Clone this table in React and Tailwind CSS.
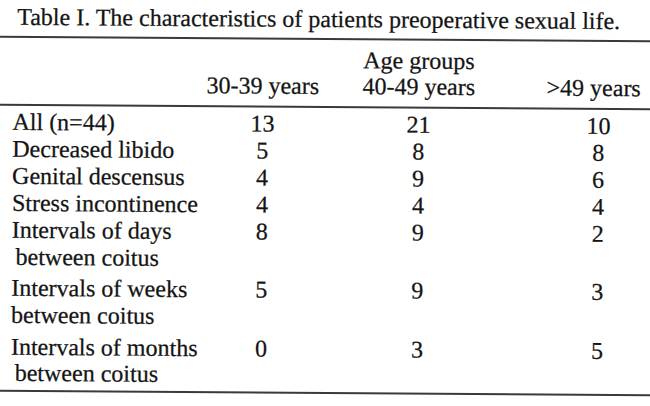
const rows = [
  { lines: ["All (n=44)"], values: ["13", "21", "10"] },
  { lines: ["Decreased libido"], values: ["5", "8", "8"] },
  { lines: ["Genital descensus"], values: ["4", "9", "6"] },
  { lines: ["Stress incontinence"], values: ["4", "4", "4"] },
  { lines: ["Intervals of days", "between coitus"], values: ["8", "9", "2"], indent: true },
  { lines: ["Intervals of weeks", "between coitus"], values: ["5", "9", "3"], gap: "mt-[4px]" },
  { lines: ["Intervals of months", "between coitus"], values: ["0", "3", "5"], indent: true, gap: "mt-[5px]", tight: true },
];

function Rule({ className = "" }) {
  return <div className={`h-[2px] bg-[#3a3a3a] ${className}`} />;
}

function Row({ row }) {
  return (
    <div className={`flex ${row.gap || ""}`}>
      <div className="w-[212px] pl-[12px] whitespace-nowrap">
        <div>{row.lines[0]}</div>
        {row.lines[1] && (
          <div className={`${row.indent ? "pl-[4px]" : ""} ${row.tight ? "leading-[24px]" : ""}`}>{row.lines[1]}</div>
        )}
      </div>
      <div className="w-[100px] text-center">{row.values[0]}</div>
      <div className="ml-[56px] w-[100px] text-center">{row.values[1]}</div>
      <div className="ml-[80px] w-[100px] text-center">{row.values[2]}</div>
    </div>
  );
}

export default function App() {
  return (
    <div className="w-[650px] h-[406px] overflow-hidden bg-white text-[#141414] font-['Liberation_Serif',serif] text-[24px] leading-[27px] [-webkit-text-stroke:0.25px_#141414]">
      <div className="w-[650px] rotate-[0.4deg]">
        <div className="pt-[6px] pl-[16px] whitespace-nowrap">
          Table I. The characteristics of patients preoperative sexual life.
        </div>
        <Rule className="mt-[5px] -mx-[4px]" />

        <div className="mt-[7px] leading-[26px]">
          <div className="flex">
            <div className="ml-[368px] w-[100px] flex justify-center whitespace-nowrap">Age groups</div>
          </div>
          <div className="flex whitespace-nowrap">
            <div className="ml-[212px] w-[100px] flex justify-center">30-39 years</div>
            <div className="ml-[56px] w-[100px] flex justify-center">40-49 years</div>
            <div className="ml-[80px] w-[100px] flex justify-end pr-[8px]">&gt;49 years</div>
          </div>
        </div>
        <Rule className="mt-[7px] -mx-[4px]" />

        <div className="mt-[3px]">
          {rows.map((row) => (
            <Row key={row.lines.join(" ")} row={row} />
          ))}
        </div>
        <Rule className="mt-[5px] -mx-[4px]" />
      </div>
    </div>
  );
}
